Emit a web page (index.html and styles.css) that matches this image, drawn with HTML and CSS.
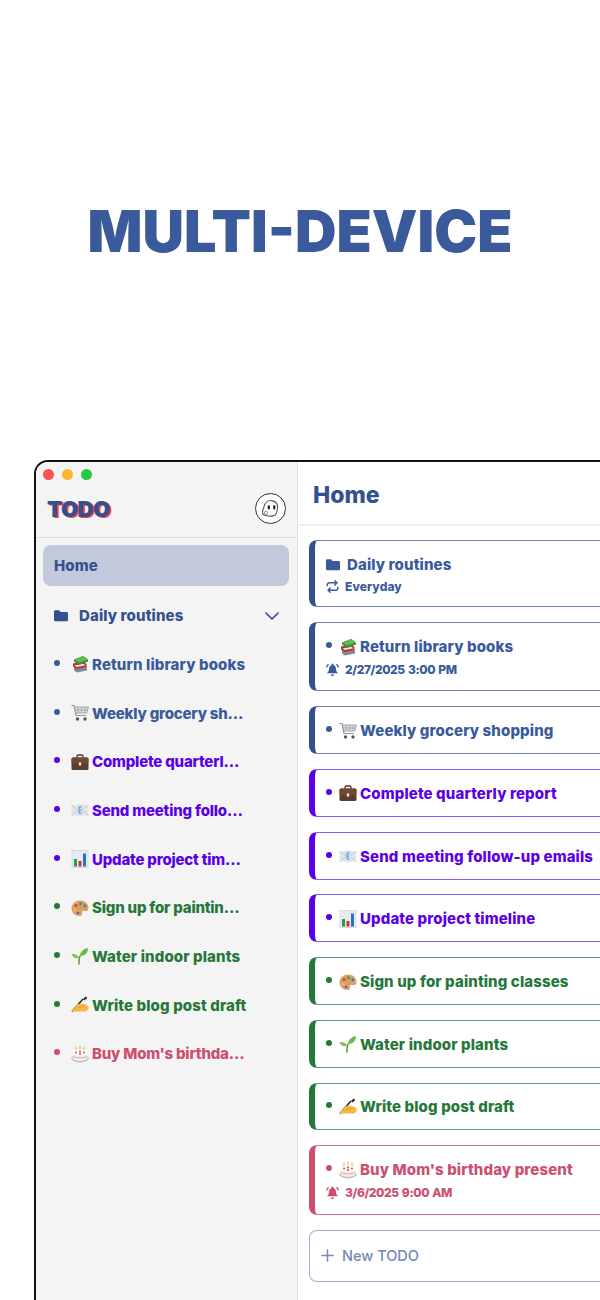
FILE: index.html
```html
<!DOCTYPE html>
<html lang="en">
<head>
    <meta charset="UTF-8">
    <meta name="viewport" content="width=device-width, initial-scale=1.0">
    <title>TODO multi-device</title>
    <link rel="stylesheet" href="styles.css">
</head>
<body>
    <svg class="defs" width="0" height="0">
        <defs>
            <symbol id="folder" viewBox="0 0 16 14"><path d="M1.500 1h4.200l1.800 2h7a1.500 1.500 0 0 1 1.500 1.500v7.500a1.500 1.500 0 0 1-1.500 1.500h-13A1.500 1.500 0 0 1 0 12V2.500A1.500 1.500 0 0 1 1.500 1z" fill="currentColor"/></symbol>
            <symbol id="bell" viewBox="0 0 16 16"><path d="M8 .5a1.200 1.200 0 0 1 1.200 1.200v.7a4.200 4.200 0 0 1 3 4c0 3 .8 4.100 2.300 5.600v.6h-13v-.6c1.500-1.500 2.300-2.600 2.300-5.600a4.200 4.200 0 0 1 3-4v-.7A1.200 1.200 0 0 1 8 .5zM6 14h4a2 2 0 0 1-4 0z" fill="currentColor"/><path d="M2.600 2 .8 4.800M13.400 2l1.800 2.800" stroke="currentColor" stroke-width="1.600" stroke-linecap="round" fill="none"/></symbol>
            <symbol id="repeat" viewBox="0 0 16 16"><path d="M1.500 7V6a2.500 2.500 0 0 1 2.500-2.500h9M11 1l2.500 2.500L11 6M14.500 9v1a2.500 2.500 0 0 1-2.500 2.500H3M5 10l-2.500 2.500L5 15" stroke="currentColor" stroke-width="1.800" fill="none" stroke-linecap="round" stroke-linejoin="round"/></symbol>
            <symbol id="books" viewBox="0 0 18 18"><path d="M3 12.500l10-2 3 2v3l-10 2-3-2z" fill="#85879a"/><path d="M2 8.500l10-2 3.500 2.500v3l-10 2-3.500-2.500z" fill="#b8322f"/><path d="M3.500 10.500l8.500-1.800 2.500 1.500-8.500 1.800z" fill="#efe9e0"/><path d="M3 4.500l9-3.500 5 3.500v2l-9 3.500-5-3.500z" fill="#3f8c3a"/><path d="M3 4.500l9-3.500 5 3.500-9 3z" fill="#63b84f"/></symbol>
            <symbol id="cart" viewBox="0 0 18 18"><path d="M.5 1.500h2.500l2 10h10" stroke="#8e949b" stroke-width="1.200" fill="none"/><path d="M3.500 3h14l-1.800 6H4.700z" fill="#dcdfe3" stroke="#8e949b" stroke-width=".8"/><path d="M7 3.500v5M10.500 3.500v5M14 3.500v5M4.300 6h12.500" stroke="#8e949b" stroke-width=".6"/><circle cx="6.500" cy="15" r="1.700" fill="#555555"/><circle cx="14" cy="15" r="1.700" fill="#555555"/></symbol>
            <symbol id="case" viewBox="0 0 18 18"><path d="M6 5V3.500A1.500 1.500 0 0 1 7.500 2h3A1.500 1.500 0 0 1 12 3.500V5" stroke="#4a3024" stroke-width="1.300" fill="none"/><rect x="0.500" y="4.500" width="17" height="12.500" rx="1.500" fill="#5d3d2c"/><rect x="0.500" y="4.500" width="17" height="6" rx="1.500" fill="#6f4a36"/><rect x="7.800" y="9.500" width="2.400" height="3" fill="#eeeeee"/></symbol>
            <symbol id="mail" viewBox="0 0 18 18"><rect x="0.500" y="4" width="17" height="10.500" fill="#e3e5e8"/><path d="M.5 4l6 5M17.500 4l-6 5M.5 14.500l6-4.500M17.500 14.500l-6-4.500" stroke="#c3c6cb" stroke-width=".8"/><rect x="6.500" y="3.500" width="5" height="11" fill="#cfe0f2"/><path d="M8 6h2.500M8 9h2.500M8 12h2.500M8 6v6" stroke="#5b95d6" stroke-width="1"/></symbol>
            <symbol id="chart" viewBox="0 0 18 18"><rect x="1" y="0.500" width="16" height="17" fill="#e6ebef" stroke="#c7ccd1" stroke-width=".6"/><rect x="3" y="9" width="3" height="7.500" fill="#1fa24a"/><rect x="7.500" y="11" width="3" height="5.500" fill="#d4322c"/><rect x="12" y="3.500" width="3" height="13" fill="#2a6fc9"/></symbol>
            <symbol id="palette" viewBox="0 0 18 18"><path d="M9 1.500c5 0 8.500 3 8.500 7.500 0 3-2.500 3.500-4 3-2-.6-3 .5-2.500 2 .5 1.800-.5 3-2.500 3C4 17 .5 13.500.5 9.500S4 1.500 9 1.500z" fill="#d9a066"/><circle cx="5" cy="6.500" r="1.500" fill="#d8403a"/><circle cx="9.500" cy="4.800" r="1.500" fill="#3f9a4a"/><circle cx="13.800" cy="7" r="1.400" fill="#3c78d0"/><circle cx="4" cy="11" r="1.500" fill="#e8c13a"/><circle cx="7" cy="14" r="1.300" fill="#8a47c8"/></symbol>
            <symbol id="plant" viewBox="0 0 18 18"><path d="M8 17c0-4 0-6 1-8" stroke="#5aa63f" stroke-width="1.600" fill="none" stroke-linecap="round"/><path d="M9 9c0-4 3-7 8-8 0 5-3 8-8 8z" fill="#6fb84a"/><path d="M8 11C7 8 4 6.500 .5 7c1 3.500 4 5 7.500 4z" fill="#7cc452"/></symbol>
            <symbol id="write" viewBox="0 0 18 18"><path d="M1 15.500L12 3" stroke="#222222" stroke-width="1.400"/><path d="M14.500 .5l1.800 1.500-3 2.500-1.300-1.300z" fill="#222222"/><path d="M6 8.500c2-1 4-1 6-.5 2 .3 4 1 5.500 2.500.5 1.500 0 3-1 3.500l-1 1.500H4c-2 0-3.500-.5-3.500-1.500S3 13 4 11.500z" fill="#f4b942"/><path d="M7 12c2-1.500 4-1.500 6-1" stroke="#d9962b" stroke-width=".8" fill="none"/></symbol>
            <symbol id="cake" viewBox="0 0 18 18"><path d="M5 1.500v4M9 .5v4.500M13 1.500v4" stroke="#e9b949" stroke-width="1.100"/><ellipse cx="9" cy="13.500" rx="8.800" ry="4" fill="#c4c4c4"/><path d="M1.500 7.500h15V13c0 1.500-3 2.800-7.500 2.800S1.500 14.500 1.500 13z" fill="#f3ede4"/><ellipse cx="9" cy="7.500" rx="7.500" ry="3" fill="#ffffff"/><circle cx="5" cy="7.500" r=".9" fill="#c8323a"/><circle cx="9" cy="6.500" r=".9" fill="#c8323a"/><circle cx="13" cy="7.500" r=".9" fill="#c8323a"/><circle cx="9" cy="9" r=".9" fill="#c8323a"/><path d="M2 11.500c2 1.700 12 1.700 14 0" stroke="#d8a0a0" stroke-width=".9" fill="none"/></symbol>
        </defs>
    </svg>

    <header class="hero">
        <h1>MULTI-DEVICE</h1>
    </header>

    <div class="window">
        <aside class="sidebar">
            <div class="traffic">
                <span class="dot red"></span>
                <span class="dot yellow"></span>
                <span class="dot green"></span>
            </div>
            <div class="brand-row">
                <span class="logo">TODO</span>
                <span class="avatar">
                    <svg width="24" height="24" viewBox="0 0 22 22"><path d="M3.500 15.500c-.8-1.500 0-3.500 1-6.500 1-3.800 3.800-6.200 7-5.700 3.800.6 6 3.200 5.500 7-.4 3.200-1 5.500-2.500 6.500-2.200 1.200-9.500 1-11-1.300z" fill="#ffffff" stroke="#555555" stroke-width="1"/><rect x="8" y="7.500" width="2" height="4" rx="1" fill="#222222"/><rect x="13" y="7.500" width="2" height="4" rx="1" fill="#222222"/><circle cx="6.500" cy="14.500" r="1.500" fill="none" stroke="#888888" stroke-width=".8"/></svg>
                </span>
            </div>
            <nav class="side-nav">
                <a class="side-home">Home</a>
                <div class="side-folder">
                    <svg class="folder-icon"><use href="#folder"/></svg>
                    <span class="side-folder-name">Daily routines</span>
                    <svg class="chevron" viewBox="0 0 14 8" width="14" height="8"><path d="M1 1l6 6 6-6" stroke="currentColor" stroke-width="1.700" fill="none" stroke-linecap="round" stroke-linejoin="round"/></svg>
                </div>
                <ul class="side-list">
                    <li class="side-item blue"><i class="bullet"></i><svg class="emoji"><use href="#books"/></svg><span class="side-label">Return library books</span></li>
                    <li class="side-item blue"><i class="bullet"></i><svg class="emoji"><use href="#cart"/></svg><span class="side-label cut">Weekly grocery sh…</span></li>
                    <li class="side-item purple"><i class="bullet"></i><svg class="emoji"><use href="#case"/></svg><span class="side-label cut">Complete quarterl…</span></li>
                    <li class="side-item purple"><i class="bullet"></i><svg class="emoji"><use href="#mail"/></svg><span class="side-label cut">Send meeting follo…</span></li>
                    <li class="side-item purple"><i class="bullet"></i><svg class="emoji"><use href="#chart"/></svg><span class="side-label cut">Update project tim…</span></li>
                    <li class="side-item green-text"><i class="bullet"></i><svg class="emoji"><use href="#palette"/></svg><span class="side-label cut">Sign up for paintin…</span></li>
                    <li class="side-item green-text"><i class="bullet"></i><svg class="emoji"><use href="#plant"/></svg><span class="side-label">Water indoor plants</span></li>
                    <li class="side-item green-text"><i class="bullet"></i><svg class="emoji"><use href="#write"/></svg><span class="side-label">Write blog post draft</span></li>
                    <li class="side-item pink"><i class="bullet"></i><svg class="emoji"><use href="#cake"/></svg><span class="side-label cut">Buy Mom's birthda…</span></li>
                </ul>
            </nav>
        </aside>

        <main class="content">
            <div class="content-head"><h2>Home</h2></div>
            <div class="cards">
                <div class="card blue tall">
                    <div class="card-title"><svg class="folder-icon"><use href="#folder"/></svg><span class="folder-name">Daily routines</span></div>
                    <div class="card-meta"><svg class="meta-icon"><use href="#repeat"/></svg>Everyday</div>
                </div>
                <div class="card blue alarm">
                    <div class="card-title"><i class="bullet"></i><svg class="emoji"><use href="#books"/></svg>Return library books</div>
                    <div class="card-meta date"><svg class="meta-icon"><use href="#bell"/></svg>2/27/2025 3:00 PM</div>
                </div>
                <div class="card blue"><div class="card-title"><i class="bullet"></i><svg class="emoji"><use href="#cart"/></svg>Weekly grocery shopping</div></div>
                <div class="card purple"><div class="card-title"><i class="bullet"></i><svg class="emoji"><use href="#case"/></svg>Complete quarterly report</div></div>
                <div class="card purple"><div class="card-title"><i class="bullet"></i><svg class="emoji"><use href="#mail"/></svg>Send meeting follow-up emails</div></div>
                <div class="card purple"><div class="card-title"><i class="bullet"></i><svg class="emoji"><use href="#chart"/></svg>Update project timeline</div></div>
                <div class="card green-text"><div class="card-title"><i class="bullet"></i><svg class="emoji"><use href="#palette"/></svg>Sign up for painting classes</div></div>
                <div class="card green-text"><div class="card-title"><i class="bullet"></i><svg class="emoji"><use href="#plant"/></svg>Water indoor plants</div></div>
                <div class="card green-text"><div class="card-title"><i class="bullet"></i><svg class="emoji"><use href="#write"/></svg>Write blog post draft</div></div>
                <div class="card pink alarm">
                    <div class="card-title"><i class="bullet"></i><svg class="emoji"><use href="#cake"/></svg>Buy Mom's birthday present</div>
                    <div class="card-meta date"><svg class="meta-icon"><use href="#bell"/></svg>3/6/2025 9:00 AM</div>
                </div>
                <div class="new-todo">
                    <svg width="13" height="13" viewBox="0 0 13 13"><path d="M6.500 1v11M1 6.500h11" stroke="currentColor" stroke-width="1.500" stroke-linecap="round"/></svg>
                    New TODO
                </div>
            </div>
        </main>
    </div>
</body>
</html>
```

FILE: styles.css
```css
* {
    box-sizing: border-box;
}
html, body {
    margin: 0;
    height: 1300px;
    overflow: hidden;
}
body {
    background-color: #ffffff;
    font-family: "Inter", "Liberation Sans", sans-serif;
    color: #35508f;
}
.defs {
    display: block;
    height: 0;
}
.hero {
    height: 460px;
    display: flex;
    justify-content: center;
    padding-top: 196px;
}
.hero h1 {
    margin: 0;
    font-size: 57.500px;
    line-height: 70px;
    font-weight: 900;
    color: #3a5a9b;
}
.window {
    margin-left: 34px;
    height: 840px;
    display: flex;
    border: 2px solid #111111;
    border-right: none;
    border-bottom: none;
    border-radius: 14px 0 0 0;
    overflow: hidden;
}
.sidebar {
    width: 262px;
    flex-shrink: 0;
    background-color: #f4f4f4;
    border-right: 1px solid #e2e2e2;
}
.traffic {
    display: flex;
    gap: 8px;
    padding: 7px 0 0 7px;
}
.dot {
    width: 11px;
    height: 11px;
    border-radius: 50%;
}
.dot.red { background-color: #fb5350; }
.dot.yellow { background-color: #fdb52e; }
.dot.green { background-color: #27c83f; }
.brand-row {
    height: 58px;
    display: flex;
    align-items: center;
    justify-content: space-between;
    padding: 0 11px;
    border-bottom: 1px solid #dcdcdc;
}
.logo {
    font-size: 22px;
    font-weight: 900;
    color: #35508f;
    letter-spacing: -0.4px;
    text-shadow: 2px 1px 0 #f0444c;
}
.avatar {
    width: 31px;
    height: 31px;
    border-radius: 50%;
    border: 1.500px solid #333333;
    background-color: #ffffff;
    display: flex;
    align-items: center;
    justify-content: center;
}
.side-nav {
    padding: 7px 8px 0 7px;
    font-size: 15px;
    font-weight: 800;
    letter-spacing: 0.12px;
}
.side-home {
    display: flex;
    align-items: center;
    height: 41px;
    padding-left: 11px;
    border-radius: 8px;
    background-color: #c2c9da;
    color: #35508f;
}
.side-folder {
    display: flex;
    align-items: center;
    height: 49px;
    margin-top: 5px;
    padding: 0 10px 0 11px;
    color: #35508f;
}
.folder-icon {
    width: 14px;
    height: 13px;
    flex-shrink: 0;
}
.side-folder-name {
    flex: 1;
    margin-left: 11px;
}
.side-list {
    list-style: none;
    margin: 0;
    padding: 0;
}
.side-item {
    display: flex;
    align-items: center;
    height: 48.700px;
    padding-left: 11px;
    white-space: nowrap;
}
.side-label.cut {
    letter-spacing: -0.2px;
}
.bullet {
    width: 6px;
    height: 6px;
    margin-top: -3px;
    border-radius: 50%;
    background-color: currentColor;
    flex-shrink: 0;
}
.emoji {
    width: 18px;
    height: 18px;
    flex-shrink: 0;
    margin: 0 3px 0 11px;
}
.blue { color: #3a5a9b; }
.purple { color: #5b00e6; }
.green-text { color: #25773a; }
.pink { color: #cc4f6f; }
.content {
    flex: 1;
    background-color: #ffffff;
}
.content-head {
    height: 64px;
    display: flex;
    align-items: center;
    padding: 4px 0 0 15px;
    border-bottom: 2px solid #eeeeee;
}
.content-head h2 {
    margin: 0;
    font-size: 23px;
    font-weight: 800;
    color: #35508f;
}
.cards {
    display: flex;
    flex-direction: column;
    gap: 14.900px;
    padding: 14px 0 0 11px;
}
.card {
    height: 47.800px;
    display: flex;
    flex-direction: column;
    justify-content: center;
    gap: 5px;
    padding: 1px 0 0 11px;
    border: 1.500px solid;
    border-right: none;
    border-left-width: 6px;
    border-radius: 8px 0 0 8px;
    font-size: 15px;
    font-weight: 800;
    letter-spacing: 0.12px;
}
.card.tall {
    height: 67.100px;
}
.card.alarm {
    height: 69.500px;
    gap: 6px;
}
.card.blue { border-color: #6b83b6; border-left-color: #35508f; }
.card.purple { border-color: #8a55f0; border-left-color: #5b00e6; }
.card.green-text { border-color: #5d9a6d; border-left-color: #25773a; }
.card.pink { border-color: #de6f88; border-left-color: #cc4f6f; }
.card-title {
    display: flex;
    align-items: center;
    white-space: nowrap;
}
.card-title .emoji {
    margin: 0 3px 0 7px;
}
.folder-name {
    margin-left: 7px;
}
.card-meta {
    display: flex;
    align-items: center;
    font-size: 12px;
    letter-spacing: 0.1px;
}
.card-meta.date {
    letter-spacing: -0.4px;
    word-spacing: 1px;
}
.meta-icon {
    width: 13px;
    height: 13px;
    margin-right: 6px;
}
.new-todo {
    height: 52px;
    display: flex;
    align-items: center;
    gap: 8px;
    padding-left: 11px;
    border: 1.500px solid #a3b2d3;
    border-right: none;
    border-radius: 8px 0 0 8px;
    font-size: 14.500px;
    font-weight: 500;
    color: #7488b5;
}
```
